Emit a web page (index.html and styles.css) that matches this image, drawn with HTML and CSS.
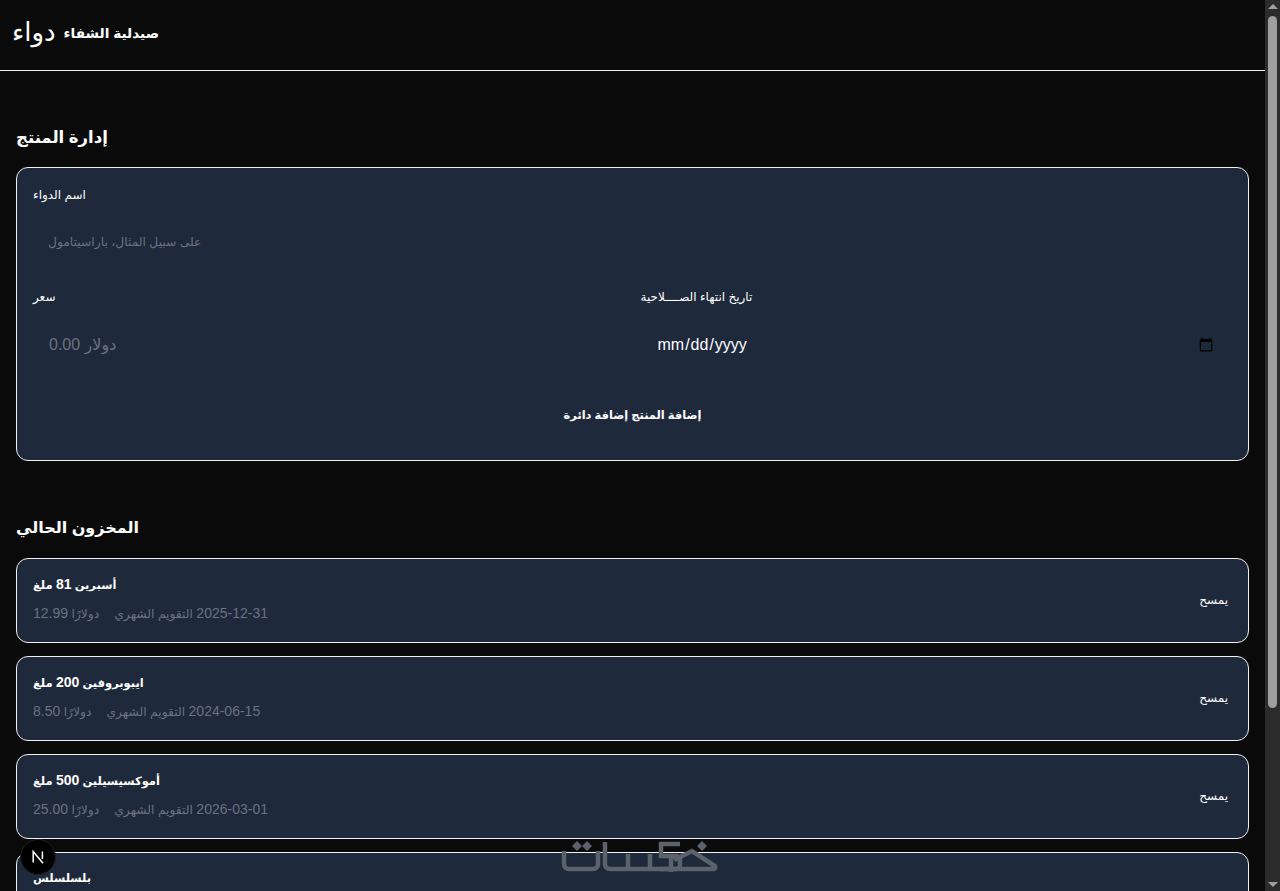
FILE: index.html
```html
<!DOCTYPE html>
<html lang="ar">
<head>
  <meta charset="UTF-8" />
  <meta name="viewport" content="width=device-width, initial-scale=1.0"/>
  <title>صيدلية الشفاء</title>
  <link rel="stylesheet" href="styles.css">
</head>
<body>
  <header class="site-header">
    <span class="logo">دواء</span>
    <h1 class="brand">صيدلية الشفاء</h1>
  </header>

  <main class="content">
    <h2 class="section-title">إدارة المنتج</h2>
    <form class="card product-form">
      <div class="field">
        <label for="name">اسم الدواء</label>
        <input type="text" id="name" class="name-input" placeholder="على سبيل المثال، باراسيتامول">
      </div>
      <div class="form-row">
        <div class="field">
          <label for="price">سعر</label>
          <input type="text" id="price" placeholder="دولار 0.00">
        </div>
        <div class="field">
          <label for="expiry">تاريخ انتهاء الصــــلاحية</label>
          <input type="date" id="expiry">
        </div>
      </div>
      <button type="button" class="add-btn">إضافة المنتج إضافة دائرة</button>
    </form>

    <h2 class="section-title stock-title">المخزون الحالي</h2>
    <ul class="stock-list">
      <li class="card item">
        <div>
          <p class="item-name">أسبرين <span class="num">81</span> ملغ</p>
          <p class="item-meta" dir="rtl"><span><span class="num">2025-12-31</span> التقويم الشهري</span><span>دولارًا <span class="num">12.99</span></span></p>
        </div>
        <button type="button" class="delete-btn">يمسح</button>
      </li>
      <li class="card item">
        <div>
          <p class="item-name">ايبوبروفين <span class="num">200</span> ملغ</p>
          <p class="item-meta" dir="rtl"><span><span class="num">2024-06-15</span> التقويم الشهري</span><span>دولارًا <span class="num">8.50</span></span></p>
        </div>
        <button type="button" class="delete-btn">يمسح</button>
      </li>
      <li class="card item">
        <div>
          <p class="item-name">أموكسيسيلين <span class="num">500</span> ملغ</p>
          <p class="item-meta" dir="rtl"><span><span class="num">2026-03-01</span> التقويم الشهري</span><span>دولارًا <span class="num">25.00</span></span></p>
        </div>
        <button type="button" class="delete-btn">يمسح</button>
      </li>
      <li class="card item">
        <div>
          <p class="item-name">بلسلسلس</p>
          <p class="item-meta" dir="rtl"><span><span class="num">2025-01-01</span> التقويم الشهري</span><span>دولارًا <span class="num">10.00</span></span></p>
        </div>
        <button type="button" class="delete-btn">يمسح</button>
      </li>
    </ul>
  </main>

  <button type="button" class="dev-badge" aria-label="Next.js">
    <svg viewBox="0 0 16 16" width="16" height="16" fill="none" stroke="#fff" stroke-width="1.5">
      <path d="M3.2 13.5V2.6L13 14.2"/>
      <path d="M12.4 2.5V10"/>
    </svg>
  </button>

  <svg class="watermark" viewBox="0 0 160 36" width="160" height="36" fill="none" stroke="#5b626c" stroke-width="4.5">
    <path d="M4 11V24a5 5 0 0 0 5 5H33a5 5 0 0 0 5-5V11"/>
    <path d="M45 2V24a5 5 0 0 0 5 5H110"/>
    <path d="M68 14V29M90 14V29"/>
    <path d="M120 4H101V16H116a4 4 0 0 1 4 4V25a4 4 0 0 1-4 4H100"/>
    <path d="M111 18V32"/>
    <path d="M111 29H153a2 2 0 0 0 2-3L132 11 114 20"/>
    <path d="M17 1l5 5-5 5-5-5zM27 1l5 5-5 5-5-5zM142 1l5 5-5 5-5-5z" fill="#5b626c" stroke="none"/>
  </svg>

  <div class="scrollbar" aria-hidden="true">
    <span class="arrow-up"></span>
    <span class="thumb"></span>
    <span class="arrow-down"></span>
  </div>
</body>
</html>
```

FILE: styles.css
```css
:root {
  --bg: #0a0a0a;
  --card-bg: #1e293b;
  --line: #f1f1f1;
  --muted: #6b7280;
}
* { box-sizing: border-box; }
body {
  margin: 0;
  padding-right: 15px;
  background: var(--bg);
  color: #fff;
  font-family: "Liberation Sans", "DejaVu Sans", sans-serif;
}

.site-header {
  display: flex;
  align-items: center;
  gap: 8px;
  height: 71px;
  padding: 0 12px 5px;
  border-bottom: 1px solid var(--line);
}
.logo {
  font-size: 26px;
  letter-spacing: 3px;
}
.brand {
  margin: 0;
  font-size: 13.7px;
  font-weight: bold;
}

.content { padding: 50px 16px 69px; }
.section-title {
  margin: 0 0 14px;
  font-size: 16.5px;
  line-height: 32px;
}
.stock-title {
  margin-top: 51px;
  font-size: 16px;
}

.card {
  background: var(--card-bg);
  border: 1px solid var(--line);
  border-radius: 12px;
}
.product-form { padding: 15px 16px 16px; }
.field label {
  display: block;
  font-size: 12px;
  line-height: 24px;
}
.field input {
  display: block;
  width: 100%;
  height: 48px;
  margin-top: 12px;
  padding: 0 16px;
  background: transparent;
  border: none;
  color: #fff;
  font-family: inherit;
  font-size: 16px;
  outline: none;
}
.field .name-input {
  padding: 0 16px 2px 15px;
  font-size: 12.3px;
}
.field input::placeholder { color: var(--muted); opacity: 1; }
.field input[type="date"] { color-scheme: light; color: #fff; }
.form-row {
  display: grid;
  grid-template-columns: 1fr 1fr;
  gap: 16px;
  margin-top: 18px;
}
.add-btn {
  display: block;
  margin: 27px auto 10px;
  padding: 12px;
  background: none;
  border: none;
  color: #fff;
  font-family: inherit;
  font-size: 11.4px;
  font-weight: bold;
}

.stock-list {
  display: flex;
  flex-direction: column;
  gap: 13px;
  margin: 0;
  padding: 0;
  list-style: none;
}
.item {
  display: flex;
  justify-content: space-between;
  align-items: center;
  height: 85px;
  padding: 0 16px 6px;
}
.item-name {
  margin: 0 0 6px;
  font-size: 11.5px;
  font-weight: bold;
  line-height: 24px;
}
.item-meta {
  display: flex;
  justify-content: flex-end;
  gap: 15px;
  margin: 0;
  color: var(--muted);
  font-size: 12.3px;
  line-height: 20px;
}
.num { font-size: 14px; }
.delete-btn {
  margin-top: 4px;
  padding: 4px;
  background: none;
  border: none;
  color: #fff;
  font-family: inherit;
  font-size: 12px;
}

.dev-badge {
  position: fixed;
  left: 20px;
  bottom: 16px;
  display: flex;
  align-items: center;
  justify-content: center;
  width: 36px;
  height: 36px;
  padding: 0;
  background: #000;
  border: 1px solid #222;
  border-radius: 50%;
}
.watermark {
  position: fixed;
  left: 560px;
  bottom: 15px;
  pointer-events: none;
}

/* the window's own scrollbar, which the headless browser does not paint */
.scrollbar {
  position: fixed;
  top: 0;
  right: 0;
  bottom: 0;
  display: flex;
  flex-direction: column;
  align-items: center;
  width: 15px;
  background: #2c2c2c;
}
.arrow-up {
  margin-top: 4px;
  border: 5px solid transparent;
  border-top: 0;
  border-bottom-color: #a0a0a0;
}
.thumb {
  width: 9px;
  height: 692px;
  margin-top: 7px;
  background: #9f9f9f;
  border-radius: 5px;
}
.arrow-down {
  margin-top: auto;
  margin-bottom: 4px;
  border: 5px solid transparent;
  border-bottom: 0;
  border-top-color: #a0a0a0;
}
```
